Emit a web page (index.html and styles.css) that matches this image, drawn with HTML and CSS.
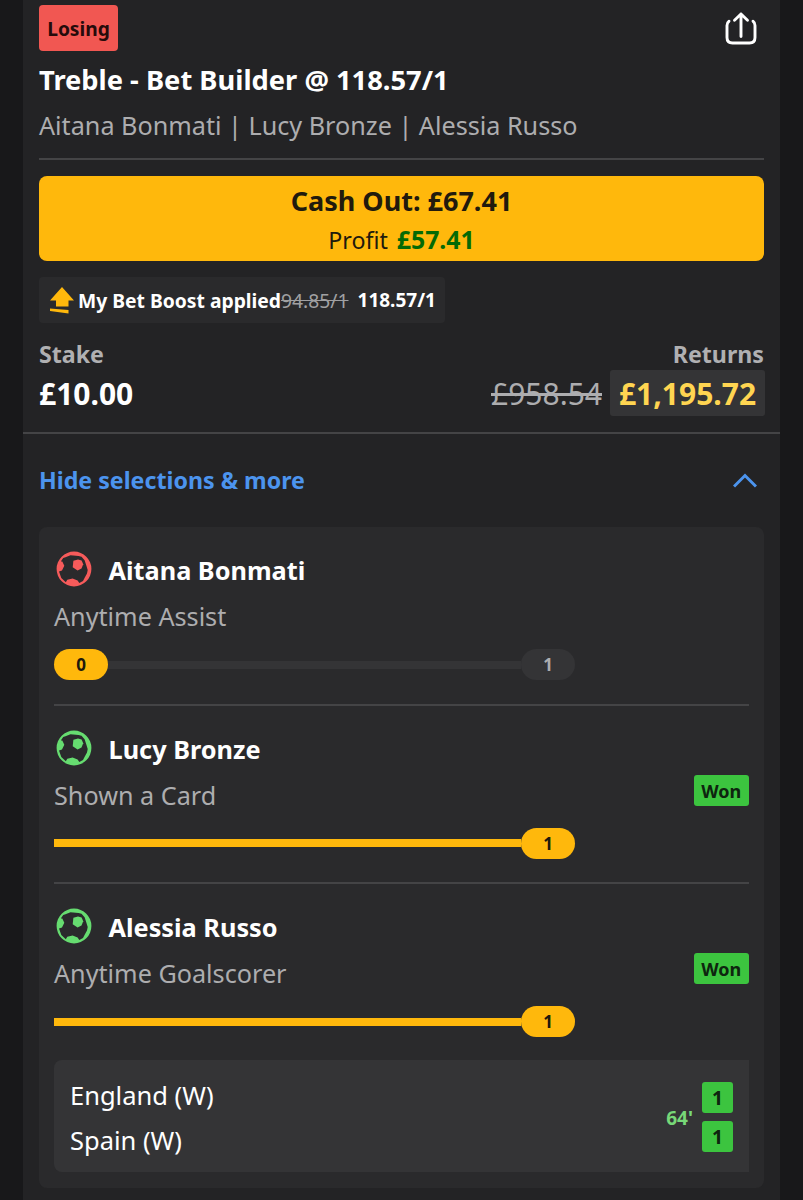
FILE: index.html
```html
<!DOCTYPE html>
<html lang="en">
<head>
<meta charset="utf-8">
<title>Treble - Bet Builder</title>
<link rel="stylesheet" href="styles.css">
</head>
<body>
<svg width="0" height="0" class="defs" aria-hidden="true">
  <symbol id="ball" viewBox="0 0 36 36">
    <path fill="currentColor" fill-rule="evenodd" d="M18 .6a17.400 17.400 0 1 1 0 34.800a17.400 17.400 0 0 1 0-34.800zM6.300 10.600 4.800 10.500 7.200 7 9.500 6.200 14.500 4.200 22.600 5.100 25.500 5.700 28.600 9.200 30.400 14.700 31.700 19 31 22.500 28.800 26.500 27 30 23.300 32 21.600 29.600 16.600 27.600 11.300 28.700 9.800 31.300 5.300 27 3 20.600 6 19.400 8.300 14.700z"/>
    <path fill="currentColor" d="M17.400 9.700 22 8.500 25.600 9.600 27.200 13.200 25.500 17.500 21.600 19.500 16.700 16.200z"/>
  </symbol>
</svg>
<main class="card">
  <section class="summary">
    <header class="top">
      <span class="status">Losing</span>
      <svg class="share" viewBox="0 0 34 34" fill="none" stroke="#fff" stroke-width="2.900" stroke-linecap="round" stroke-linejoin="round"><path d="M5 10.200Q3 11.600 3 14.500v12Q3 32 8.500 32h17Q31 32 31 26.500v-12q0-2.900-2-4.300M17 25.500V3M10.500 9.200 17 3l6.500 6.200"/></svg>
    </header>
    <h1 class="title">Treble - Bet Builder @ 118.57/1</h1>
    <p class="players">Aitana Bonmati | Lucy Bronze | Alessia Russo</p>
    <button class="cashout">
      <span class="cash-main">Cash Out: £67.41</span>
      <span class="cash-profit">Profit <b>£57.41</b></span>
    </button>
    <div class="boost">
      <svg class="boost-icon" viewBox="0 0 24 27" fill="#ffb80c"><path d="M12 0 24 13.500H18.500V19.500H6V13.500H0zM0 21.500 18.500 23v3.500L0 24z"/></svg>
      <b class="boost-label">My Bet Boost applied</b><s class="boost-old">94.85/1</s><b class="boost-new">118.57/1</b>
    </div>
    <div class="labels"><span>Stake</span><span>Returns</span></div>
    <div class="amounts">
      <b class="stake">£10.00</b>
      <s class="old-return">£958.54</s>
      <b class="return">£1,195.72</b>
    </div>
  </section>
  <div class="toggle">
    <span>Hide selections &amp; more</span>
    <svg class="chevron" viewBox="0 0 24 15" fill="none" stroke="#4c94ee" stroke-width="3"><path d="M1 13.500 12 2.500l11 11"/></svg>
  </div>
  <section class="panel">
    <article class="leg">
      <h2 class="name"><svg class="ball lost"><use href="#ball"/></svg><span>Aitana Bonmati</span></h2>
      <p class="market">Anytime Assist</p>
      <div class="track"><b class="pill">0</b><i class="bar"></i><b class="pill off">1</b></div>
    </article>
    <article class="leg">
      <h2 class="name"><svg class="ball"><use href="#ball"/></svg><span>Lucy Bronze</span></h2>
      <p class="market"><span>Shown a Card</span><b class="won">Won</b></p>
      <div class="track full"><i class="bar"></i><b class="pill">1</b></div>
    </article>
    <article class="leg">
      <h2 class="name"><svg class="ball"><use href="#ball"/></svg><span>Alessia Russo</span></h2>
      <p class="market"><span>Anytime Goalscorer</span><b class="won">Won</b></p>
      <div class="track full"><i class="bar"></i><b class="pill">1</b></div>
    </article>
    <div class="match">
      <div class="teams"><span>England (W)</span><span>Spain (W)</span></div>
      <b class="clock">64'</b>
      <div class="scores"><b class="score">1</b><b class="score">1</b></div>
    </div>
  </section>
</main>
</body>
</html>
```
FILE: styles.css
```css
* { box-sizing: border-box; }
body {
  margin: 0;
  height: 1200px;
  overflow: hidden;
  background: #18181a;
  font-family: "Noto Sans", sans-serif;
  color: #fff;
}
.defs { display: block; }
h1, h2, p { margin: 0; }
.card {
  width: 757px;
  height: 1200px;
  margin-left: 23px;
  background: #232325;
}
.summary {
  height: 434px;
  padding: 5px 16px 0;
  border-bottom: 2px solid #444446;
}
.top { display: flex; justify-content: space-between; height: 46px; }
.status {
  width: 79px;
  border-radius: 4px;
  background: #f15752;
  color: #260b0b;
  font-weight: 700;
  font-size: 19.2px;
  line-height: 47px;
  text-align: center;
}
.share { width: 34px; height: 34px; margin: 6px 6px 0 0; }
.title { font-size: 27.3px; line-height: 47px; height: 46px; margin-top: 5px; white-space: nowrap; }
.players {
  height: 58px;
  border-bottom: 2px solid #444446;
  color: #adadaf;
  font-size: 25.2px;
  line-height: 46px;
  white-space: nowrap;
}
.cashout {
  display: block;
  width: 725px;
  height: 85px;
  margin: 16px 0;
  padding: 0;
  border: 0;
  border-radius: 8px;
  background: #ffb80c;
  color: #211a0d;
  font-family: inherit;
}
.cash-main, .cash-profit { display: block; }
.cash-main { font-size: 27px; line-height: 40px; font-weight: 700; }
.cash-profit { height: 36px; font-size: 23.2px; line-height: 36px; }
.cash-profit b { color: #056a05; margin-left: 3px; font-size: 24.8px; }
.boost {
  display: flex;
  align-items: center;
  width: 406px;
  height: 46px;
  padding-left: 11px;
  border-radius: 4px;
  background: #2a2a2c;
  font-size: 19.3px;
  white-space: nowrap;
}
.boost-icon { width: 24px; height: 27px; margin-right: 4px; }
.boost-old { color: #a0a0a2; }
.boost-new { margin-left: 9px; font-size: 19px; line-height: 28px; }
.labels {
  display: flex;
  justify-content: space-between;
  margin-top: 15px;
  color: #b0b0b2;
  font-size: 23.2px;
  line-height: 32px;
  font-weight: 700;
}
.amounts { display: flex; height: 46px; line-height: 48px; font-size: 30px; }
.stake { flex: 1; }
.old-return { color: #adadaf; }
.return {
  width: 155px;
  margin-left: 8px;
  margin-right: -1px;
  border-radius: 3px;
  background: #343436;
  color: #ffd551;
  text-align: center;
}
.toggle {
  display: flex;
  align-items: center;
  justify-content: space-between;
  height: 93px;
  padding: 0 23px 0 16px;
  color: #4c94ee;
  font-size: 23.2px;
  font-weight: 700;
}
.toggle span { margin-top: -2px; }
.chevron { width: 24px; height: 15px; }
.panel {
  width: 725px;
  height: 661px;
  margin-left: 16px;
  padding: 0 15px;
  border-radius: 8px;
  background: #2a2a2c;
}
.leg { height: 178.5px; padding-top: 22px; border-bottom: 2px solid #444446; }
.leg:nth-child(3) { height: 176px; border: 0; }
.name { display: flex; align-items: center; height: 44px; font-size: 25.3px; }
.name span { margin-top: -2px; }
.ball { width: 36px; height: 36px; margin: -4px 17px 0 1.5px; color: #66dc70; }
.ball.lost { color: #f65b5b; }
.market {
  display: flex;
  justify-content: space-between;
  height: 46px;
  color: #adadaf;
  font-size: 25.2px;
  line-height: 46px;
}
.won {
  width: 55.5px;
  height: 31px;
  margin-top: 3px;
  border-radius: 3px;
  background: #3cc43f;
  color: #0e250f;
  font-size: 18px;
  line-height: 32px;
  text-align: center;
}
.track { display: flex; align-items: center; width: 521px; height: 31px; margin-top: 10px; }
.bar { flex: 1; height: 8px; background: #343436; }
.full .bar { background: #ffb80c; }
.pill {
  width: 54px;
  height: 31px;
  border-radius: 16px;
  background: #ffb80c;
  color: #20190c;
  font-size: 17px;
  line-height: 32px;
  text-align: center;
}
.pill.off { background: #343436; color: #adadaf; }
.match {
  display: flex;
  align-items: center;
  height: 112px;
  padding: 0 16px;
  border-radius: 8px 0 0 8px;
  background: #343436;
}
.teams { flex: 1; display: flex; flex-direction: column; padding-top: 4px; font-size: 25.5px; line-height: 45px; }
.clock { margin: 3px 9px 0 0; color: #77d878; font-size: 19px; }
.scores { display: grid; gap: 8px; padding-top: 1px; }
.score {
  width: 31px;
  height: 31px;
  border-radius: 3px;
  background: #3cc43f;
  color: #0e250f;
  font-size: 19.3px;
  line-height: 32px;
  text-align: center;
}
```
